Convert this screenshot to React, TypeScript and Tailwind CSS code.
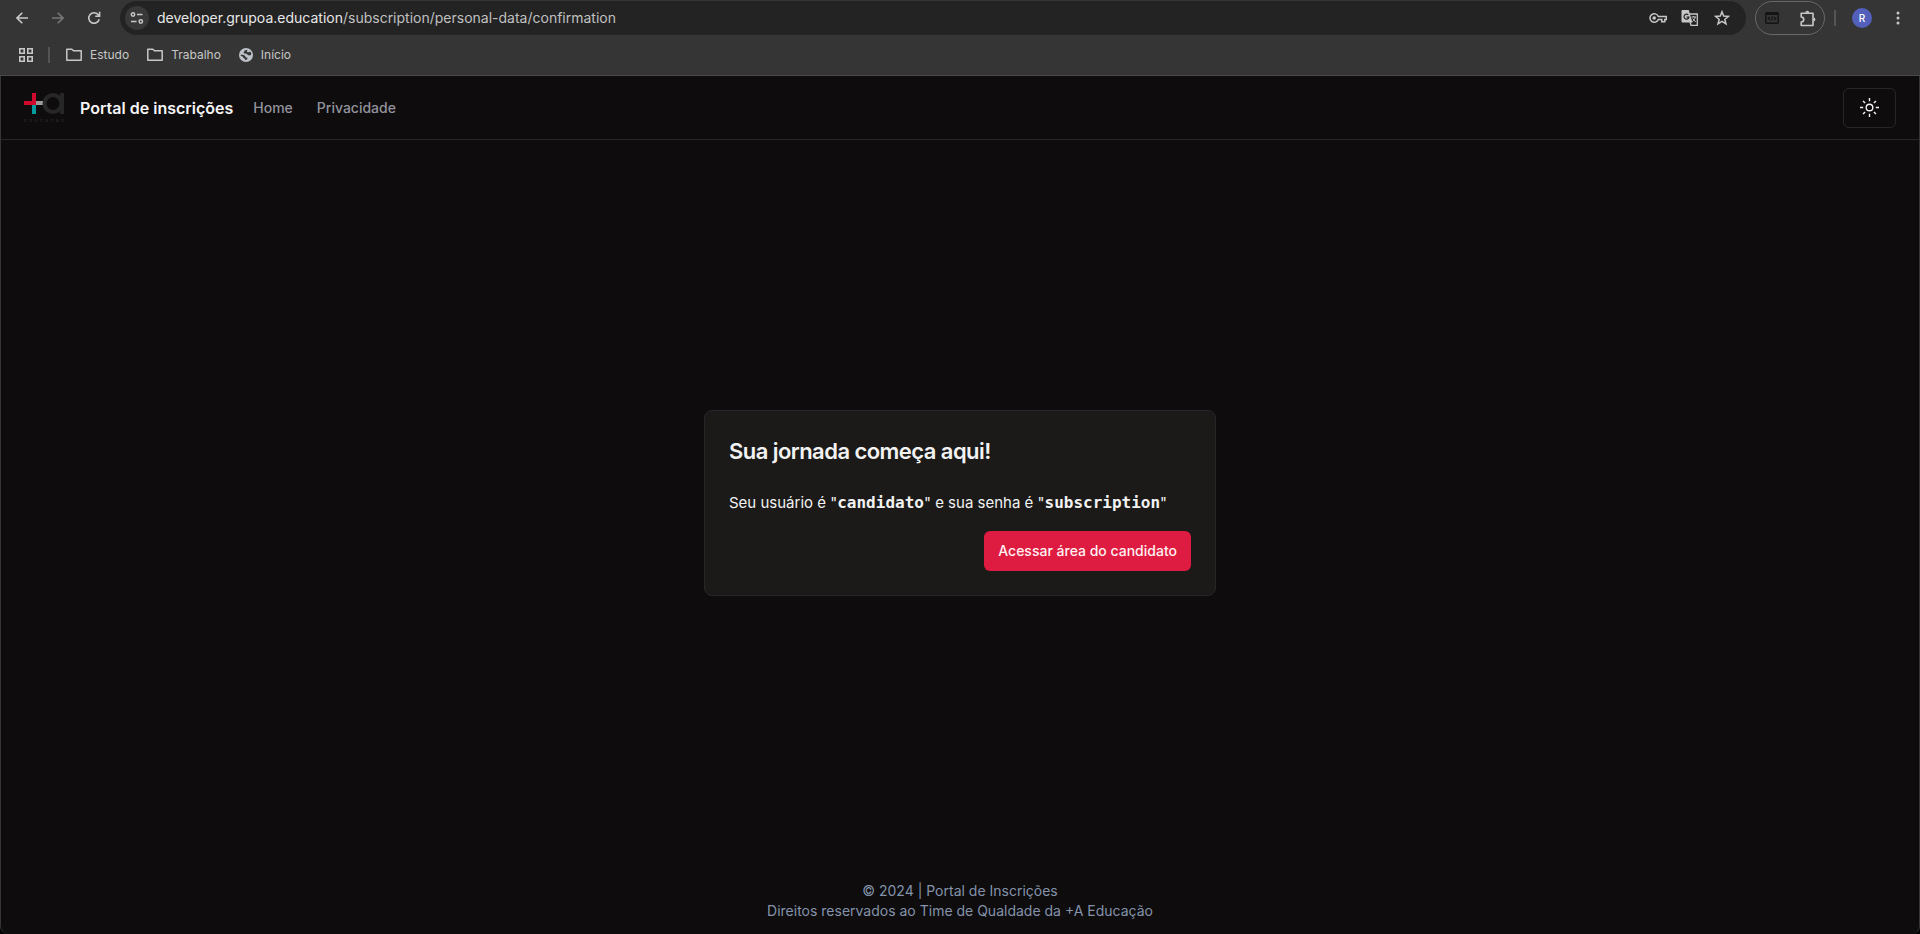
import type { ReactNode } from "react";

const iconButton = "flex size-6 shrink-0 items-center justify-center rounded-full";

function Folder() {
  return (
    <svg width="16" height="13" viewBox="0 0 16 13" fill="none" stroke="currentColor" strokeWidth="1.5" aria-hidden="true">
      <path d="M.8 1.2h5.1l1.6 1.6h7.7v9.4H.8z" strokeLinejoin="round" />
    </svg>
  );
}

function Globe() {
  return (
    <svg width="14" height="14" viewBox="0 0 14 14" aria-hidden="true">
      <circle cx="7" cy="7" r="7" fill="#bdc1c9" />
      <path d="M8.300 1.700 5.800 2.600 4.600 4.200 5.300 5.600 7.700 5.700 9.100 7.200 11.800 7.300 12.300 5.500 11.300 3.500 9.600 4.300 8 3.900zM1.700 6.700 4 6.800 6.300 7.900 6.500 9.300 8.500 9.800 8.200 11.200 6.200 12.300 6 10.800 4.400 9.900 3.700 8.400 1.800 8z" fill="#353535" />
    </svg>
  );
}

function Bookmark({ icon, children }: { icon: ReactNode; children: ReactNode }) {
  return (
    <a href="#" className="flex items-center gap-2 text-[#c7c7c7]">
      {icon}
      <span>{children}</span>
    </a>
  );
}

function BrowserBar() {
  return (
    <div className="border-b border-[#4a4a4a] bg-[#353535] text-[#c7c7c7]">
      <div className="flex h-9 items-center pr-2.5 pl-2.5">
        <div className="flex items-center gap-3">
          <button type="button" aria-label="Voltar" className={iconButton}>
            <svg width="12" height="12" viewBox="0 0 12 12" fill="none" stroke="currentColor" strokeWidth="1.6">
              <path d="M12 6H1.200M6.300.7 1 6l5.300 5.300" />
            </svg>
          </button>
          <button type="button" aria-label="Avançar" className="flex size-6 shrink-0 items-center justify-center rounded-full text-[#777]">
            <svg width="12" height="12" viewBox="0 0 12 12" fill="none" stroke="currentColor" strokeWidth="1.6">
              <path d="M0 6h10.800M5.700.7 11 6l-5.300 5.300" />
            </svg>
          </button>
          <button type="button" aria-label="Recarregar" className={iconButton}>
            <svg width="14" height="14" viewBox="0 0 14 14" fill="none" stroke="currentColor" strokeWidth="1.6">
              <path d="M12.200 8.200A5.300 5.300 0 1 1 11.200 3.700L12.500 5M12.600.8V5.200H8.200" />
            </svg>
          </button>
        </div>

        <div className="ml-3.5 flex h-[34px] flex-1 items-center rounded-full bg-[#232323] pr-3 pl-[5px]">
          <button type="button" aria-label="Informações do site" className="flex size-6 shrink-0 items-center justify-center rounded-full bg-[#383838]">
            <svg width="14" height="12" viewBox="0 0 14 12" fill="none" stroke="currentColor" strokeWidth="1.500">
              <circle cx="3" cy="2.500" r="1.700" />
              <path d="M7 2.500h5.500M1 9.500h5.500" />
              <circle cx="10.800" cy="9.500" r="1.700" />
            </svg>
          </button>
          <p className="ml-2 flex-1 text-sm text-[#c0c0c0]">
            <span className="text-[#e8e8e8]">developer.grupoa.education</span>/subscription/personal-data/confirmation
          </p>
          <div className="flex items-center gap-2">
            <button type="button" aria-label="Senhas" className={iconButton}>
              <svg width="18" height="12" viewBox="0 0 18 12" fill="none" stroke="currentColor" strokeWidth="1.500">
                <path d="M9.300 4.500A4.300 4.300 0 1 0 9.300 7.500h3.500v2.200h3V7.500h1.500v-3z" />
                <circle cx="5.200" cy="6" r="1.800" fill="currentColor" stroke="none" />
              </svg>
            </button>
            <button type="button" aria-label="Traduzir" className={iconButton}>
              <svg width="18" height="18" viewBox="0 0 18 18" fill="none">
                <path d="M7 5h9.300v11.300H10z" stroke="currentColor" strokeWidth="1.300" />
                <path d="M1.500 1h6.200l3.800 12.500H1.500A1 1 0 0 1 .5 12.500V2a1 1 0 0 1 1-1z" fill="currentColor" />
                <path d="M7.300 5.900A2.500 2.500 0 1 0 8 8.200H5.600" stroke="#232323" strokeWidth="1.200" />
                <path d="M10.500 8H15M12.700 7v1M14.200 8c-.3 2-1.500 3.400-2.800 4.500M11.700 9.500l3 3.500" stroke="currentColor" />
              </svg>
            </button>
            <button type="button" aria-label="Adicionar aos favoritos" className={iconButton}>
              <svg width="16" height="16" viewBox="0 0 16 16" fill="none" stroke="currentColor" strokeWidth="1.500">
                <path d="m8 1.800 1.700 4.300 4.700.3-3.600 3 1.200 4.500L8 11.400l-4 2.500 1.200-4.500-3.600-3 4.700-.3z" />
              </svg>
            </button>
          </div>
        </div>

        <div className="ml-[9px] flex h-[34px] items-center gap-3 rounded-full border border-[#686868] px-1">
          <button type="button" aria-label="Extensão" className={iconButton}>
            <svg width="14" height="12" viewBox="0 0 14 12" fill="none" stroke="#141414">
              <rect x=".75" y=".75" width="12.500" height="10.500" rx="1" strokeWidth="1.500" />
              <path d="M1 1.800h12" strokeWidth="2.400" />
              <path d="M5 4.900 3.200 6.500 5 8.100M9 4.900l1.800 1.600L9 8.100M7.600 4.500 6.400 8.500" strokeWidth="1.200" />
            </svg>
          </button>
          <button type="button" aria-label="Extensões" className={iconButton}>
            <svg width="16" height="17" viewBox="0 0 16 17" fill="none">
              <path d="M1.200 3.200H13V15.500H1.200V12a2.400 2.400 0 0 0 0-5z" stroke="currentColor" strokeWidth="1.600" strokeLinejoin="round" />
              <path d="M5.300 2.800a2 2 0 0 1 4 0zM13.400 7.500a2 2 0 0 1 0 4z" fill="currentColor" />
            </svg>
          </button>
        </div>
        <div className="ml-[9px] h-4 w-0.5 bg-[#555]" />
        <button type="button" aria-label="Perfil" className="ml-4 flex size-5 items-center justify-center rounded-full bg-[#5260bb] text-[10px] font-medium text-white">
          R
        </button>
        <button type="button" aria-label="Menu" className="ml-3.5 flex size-6 items-center justify-center">
          <svg width="4" height="14" viewBox="0 0 4 14" fill="currentColor">
            <circle cx="2" cy="2" r="1.500" />
            <circle cx="2" cy="7" r="1.500" />
            <circle cx="2" cy="12" r="1.500" />
          </svg>
        </button>
      </div>

      <nav aria-label="Favoritos" className="flex h-[39px] items-center pb-0.5 pl-[19px] text-xs">
        <button type="button" aria-label="Aplicativos">
          <svg width="14" height="14" viewBox="0 0 14 14" fill="none" stroke="currentColor" strokeWidth="1.600">
            <path d="M.8.8h4.400v4.400H.8zM8.800.8h4.400v4.400H8.800zM.8 8.800h4.400v4.400H.8zM8.800 8.800h4.400v4.400H8.800z" />
          </svg>
        </button>
        <div className="mr-4 ml-[15px] h-4 w-0.5 bg-[#555]" />
        <div className="flex items-center gap-[18px]">
          <Bookmark icon={<Folder />}>Estudo</Bookmark>
          <Bookmark icon={<Folder />}>Trabalho</Bookmark>
          <Bookmark icon={<Globe />}>Início</Bookmark>
        </div>
      </nav>
    </div>
  );
}

function Logo() {
  return (
    <svg width="40" height="29" viewBox="0 0 40 29" role="img" aria-label="+A Educação">
      <path d="M8 0h4v12H0V8h8z" fill="#cf0a2c" />
      <path d="M8 12h4v9H8z" fill="#009a9f" />
      <path d="M12 8h8v4h-8z" fill="#9c9c9c" />
      <circle cx="29" cy="10.500" r="8.500" fill="none" stroke="#272727" strokeWidth="4" />
      <path d="M36 0h4v21h-4z" fill="#272727" />
      <text x="0" y="28.500" fontSize="4" fontWeight="700" fill="#272727" fontFamily="Inter, sans-serif">
        {"EDUCAÇÃO".split("").map((letter, i) => (
          <tspan key={i} x={i * 5.300}>{letter}</tspan>
        ))}
      </text>
    </svg>
  );
}

function Header() {
  return (
    <header className="flex h-16 items-center border-b border-[#27272a] px-[23px]">
      <a href="#" className="flex items-center gap-4 font-semibold text-[#f5f5f5]">
        <Logo />
        Portal de inscrições
      </a>
      <nav className="ml-5 flex items-center gap-6 text-sm font-medium text-[#92929c]">
        <a href="#">Home</a>
        <a href="#">Privacidade</a>
      </nav>
      <button type="button" aria-label="Alternar tema" className="ml-auto flex h-10 items-center rounded-md border border-[#27272a] px-4 text-[#f2f2f2]">
        <svg width="19" height="19" viewBox="0 0 19 19" fill="none" stroke="currentColor" strokeWidth="1.400">
          <circle cx="9.500" cy="9.500" r="3.300" />
          <path d="M9.500 0v3.200M9.500 15.800V19M0 9.500h3.200M15.800 9.500H19M3 3l2.100 2.100M13.900 13.900l2.100 2.100M3 16l2.100-2.100M13.900 5.100 16 3" />
        </svg>
      </button>
    </header>
  );
}

export default function App() {
  return (
    <div className="flex min-h-screen flex-col bg-black font-['Inter',sans-serif]">
      <BrowserBar />
      <div className="flex flex-1 flex-col rounded-b-lg border-x border-[#363636] bg-[#0e0c0d]">
        <Header />
        <main className="flex flex-1 items-center justify-center">
          <section className="w-full max-w-lg rounded-lg border border-[#27272a] bg-[#1b1a18] p-6 text-[#f2f2f2]">
            <h1 className="text-[22px] leading-8 font-semibold tracking-tight">Sua jornada começa aqui!</h1>
            <p className="mt-6 text-[15px] leading-6">
              Seu usuário é "<strong className="font-['DejaVu_Sans_Mono',monospace] text-base leading-6 font-bold">candidato</strong>" e sua senha é "
              <strong className="font-['DejaVu_Sans_Mono',monospace] text-base leading-6 font-bold">subscription</strong>"
            </p>
            <div className="mt-4 flex justify-end">
              <button type="button" className="h-10 rounded-md bg-[#de1b40] px-3.5 text-sm font-medium text-[#fff1f2]">
                Acessar área do candidato
              </button>
            </div>
          </section>
        </main>
        <footer className="pt-4 pb-[13px] text-center text-sm text-[#8493aa]">
          <p>© 2024 | Portal de Inscrições</p>
          <p>Direitos reservados ao Time de Qualdade da +A Educação</p>
        </footer>
      </div>
    </div>
  );
}
